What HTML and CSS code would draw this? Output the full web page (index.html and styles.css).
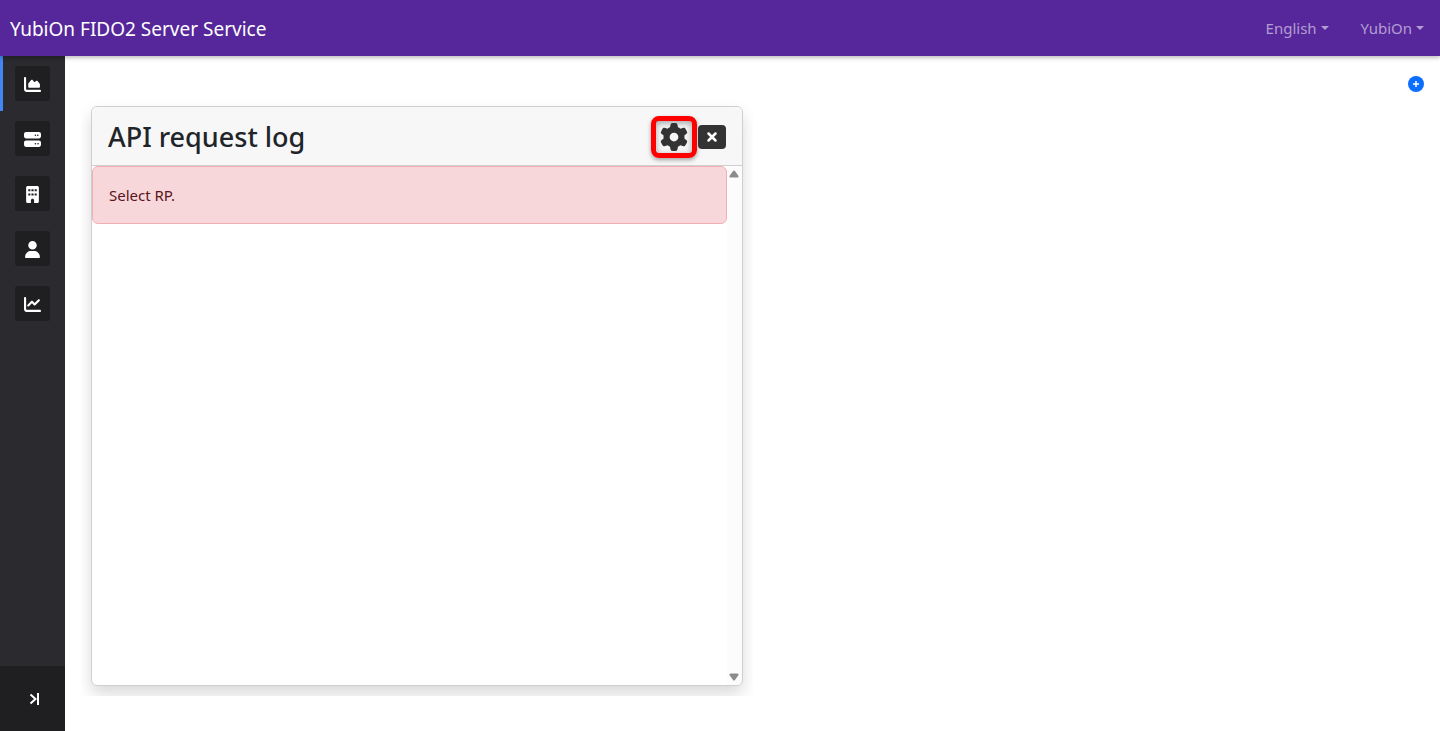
FILE: index.html
```html
<!DOCTYPE html>
<html lang="en">
<head>
    <meta charset="UTF-8">
    <meta name="viewport" content="width=device-width, initial-scale=1.0">
    <title>YubiOn FIDO2 Server Service</title>
    <link rel="stylesheet" href="styles.css">
</head>
<body>
    <header class="navbar">
        <a href="#" class="brand">YubiOn FIDO2 Server Service</a>
        <nav class="nav-menu">
            <button type="button" class="dropdown-toggle">English</button>
            <button type="button" class="dropdown-toggle">YubiOn</button>
        </nav>
    </header>

    <div class="layout">
        <aside class="sidebar">
            <nav class="side-menu">
                <a href="#" class="side-item active" aria-label="Dashboard">
                    <span class="side-icon">
                        <svg width="17" height="17" viewBox="0 0 512 512"><path d="M64 64c0-17.700-14.300-32-32-32S0 46.300 0 64V400c0 44.200 35.800 80 80 80H480c17.700 0 32-14.300 32-32s-14.300-32-32-32H80c-8.800 0-16-7.200-16-16V64zm96 288H448c17.700 0 32-14.300 32-32V251.800c0-7.600-2.700-15-7.700-20.800l-65.800-76.800c-12.100-14.200-33.700-15-46.900-1.800l-21 21c-10 10-26.400 9.200-35.400-1.600l-39.200-47c-12.600-15.100-35.700-15.400-48.700-.6L135.900 215c-5.100 5.800-7.900 13.300-7.900 21.100v84c0 17.700 14.300 32 32 32z"/></svg>
                    </span>
                </a>
                <a href="#" class="side-item" aria-label="Servers">
                    <span class="side-icon">
                        <svg width="17" height="17" viewBox="0 0 512 512"><path d="M64 32C28.700 32 0 60.700 0 96v64c0 35.300 28.700 64 64 64H448c35.300 0 64-28.700 64-64V96c0-35.300-28.700-64-64-64H64zm280 72a24 24 0 1 1 0 48 24 24 0 1 1 0-48zm48 24a24 24 0 1 1 48 0 24 24 0 1 1 -48 0zM64 288c-35.300 0-64 28.700-64 64v64c0 35.300 28.700 64 64 64H448c35.300 0 64-28.700 64-64V352c0-35.300-28.700-64-64-64H64zm280 72a24 24 0 1 1 0 48 24 24 0 1 1 0-48zm56 24a24 24 0 1 1 48 0 24 24 0 1 1 -48 0z"/></svg>
                    </span>
                </a>
                <a href="#" class="side-item" aria-label="Company">
                    <span class="side-icon">
                        <svg width="13" height="17" viewBox="0 0 384 512"><path fill-rule="evenodd" d="M48 0C21.500 0 0 21.500 0 48V464c0 26.500 21.500 48 48 48h96V432c0-26.500 21.500-48 48-48s48 21.500 48 48v80h96c26.500 0 48-21.500 48-48V48c0-26.500-21.500-48-48-48H48zM64 96h64v64H64zM160 96h64v64H160zM256 96h64v64H256zM64 224h64v64H64zM160 224h64v64H160zM256 224h64v64H256z"/></svg>
                    </span>
                </a>
                <a href="#" class="side-item" aria-label="Users">
                    <span class="side-icon">
                        <svg width="15" height="17" viewBox="0 0 448 512"><path d="M224 256A128 128 0 1 0 224 0a128 128 0 1 0 0 256zm-45.700 48C79.800 304 0 383.800 0 482.300C0 498.700 13.300 512 29.700 512H418.300c16.400 0 29.700-13.300 29.700-29.700C448 383.800 368.200 304 269.700 304H178.300z"/></svg>
                    </span>
                </a>
                <a href="#" class="side-item" aria-label="Statistics">
                    <span class="side-icon">
                        <svg width="17" height="17" viewBox="0 0 512 512"><path d="M64 64c0-17.700-14.300-32-32-32S0 46.300 0 64V400c0 44.200 35.800 80 80 80H480c17.700 0 32-14.300 32-32s-14.300-32-32-32H80c-8.800 0-16-7.200-16-16V64zm406.600 86.600c12.500-12.500 12.500-32.800 0-45.300s-32.800-12.500-45.300 0L320 210.700l-57.400-57.400c-12.500-12.500-32.800-12.500-45.300 0l-112 112c-12.500 12.500-12.500 32.800 0 45.300s32.800 12.500 45.300 0L240 221.300l57.400 57.400c12.500 12.500 32.800 12.500 45.300 0l128-128z"/></svg>
                    </span>
                </a>
            </nav>
            <button type="button" class="side-toggle" aria-label="Expand menu">
                <svg width="12" height="12" viewBox="0 0 12 12"><path d="M1.500 1.500L6.500 6l-5 4.500" fill="none" stroke="currentColor" stroke-width="2"/><path d="M8 0h2v12H8z"/></svg>
            </button>
        </aside>

        <main class="content">
            <div class="toolbar">
                <button type="button" class="add-button" aria-label="Add widget">
                    <svg width="16" height="16" viewBox="0 0 16 16"><circle cx="8" cy="8" r="8" fill="#0d6efd"/><path d="M8 5v6M5 8h6" stroke="#fff" stroke-width="1.500"/></svg>
                </button>
            </div>

            <div class="widget">
                <section class="card">
                    <div class="card-header">
                        <h1>API request log</h1>
                        <button type="button" class="setting-button" aria-label="Settings">
                            <svg width="28" height="28" viewBox="0 0 512 512"><path d="M495.900 166.600c3.200 8.700 .5 18.400-6.400 24.600l-43.300 39.400c1.100 8.300 1.700 16.800 1.700 25.400s-.6 17.100-1.700 25.400l43.300 39.400c6.900 6.200 9.600 15.900 6.400 24.600c-4.400 11.900-9.700 23.300-15.800 34.300l-4.700 8.100c-6.600 11-14 21.400-22.100 31.200c-5.900 7.200-15.700 9.600-24.500 6.800l-55.700-17.700c-13.400 10.300-28.200 18.900-44 25.400l-12.500 57.100c-2 9.100-9 16.300-18.200 17.800c-13.800 2.300-28 3.500-42.500 3.500s-28.700-1.200-42.500-3.500c-9.200-1.500-16.200-8.700-18.200-17.800l-12.500-57.100c-15.800-6.500-30.600-15.100-44-25.400L83.100 425.900c-8.800 2.800-18.600 .3-24.500-6.800c-8.100-9.800-15.500-20.200-22.100-31.200l-4.700-8.100c-6.100-11-11.400-22.400-15.800-34.300c-3.200-8.700-.5-18.400 6.400-24.600l43.300-39.400C64.600 273.100 64 264.600 64 256s.6-17.100 1.700-25.400L22.400 191.200c-6.900-6.200-9.600-15.900-6.400-24.600c4.400-11.900 9.700-23.300 15.800-34.300l4.700-8.100c6.600-11 14-21.400 22.100-31.200c5.900-7.200 15.700-9.600 24.500-6.800l55.700 17.700c13.400-10.300 28.200-18.900 44-25.400l12.500-57.100c2-9.100 9-16.300 18.200-17.800C227.300 1.200 241.500 0 256 0s28.700 1.200 42.500 3.500c9.200 1.500 16.200 8.700 18.200 17.800l12.500 57.100c15.800 6.500 30.600 15.100 44 25.400l55.700-17.700c8.800-2.800 18.600-.3 24.500 6.800c8.100 9.800 15.500 20.200 22.100 31.200l4.700 8.100c6.100 11 11.400 22.400 15.800 34.300zM256 336a80 80 0 1 0 0-160 80 80 0 1 0 0 160z"/></svg>
                        </button>
                        <button type="button" class="close-button" aria-label="Close">
                            <svg width="12" height="12" viewBox="0 0 12 12"><path d="M2.500 2.500l7 7M9.500 2.500l-7 7" fill="none" stroke="currentColor" stroke-width="2.500" stroke-linecap="round"/></svg>
                        </button>
                    </div>
                    <div class="card-body">
                        <div class="log-area">
                            <div class="alert" role="alert">Select RP.</div>
                        </div>
                        <div class="scrollbar">
                            <svg width="10" height="8" viewBox="0 0 10 8"><path d="M4 1Q5 0 6 1L9.500 6Q10 7.500 8.500 7.500H1.500Q0 7.500 .5 6z"/></svg>
                            <svg width="10" height="8" viewBox="0 0 10 8"><path d="M4 7Q5 8 6 7L9.500 2Q10 .5 8.500 .5H1.500Q0 .5 .5 2z"/></svg>
                        </div>
                    </div>
                </section>
            </div>
        </main>
    </div>
</body>
</html>
```

FILE: styles.css
```css
* {
    box-sizing: border-box;
}

body {
    margin: 0;
    min-height: 100vh;
    display: flex;
    flex-direction: column;
    font-family: "Segoe UI", "Noto Sans", "Open Sans", sans-serif;
    font-size: 15px;
    line-height: 24px;
    color: #212529;
    background-color: #fff;
}

button {
    padding: 0;
    border: none;
    background: none;
    font: inherit;
    cursor: pointer;
}

svg {
    display: block;
    fill: currentColor;
}

/* navbar */
.navbar {
    display: flex;
    justify-content: space-between;
    align-items: center;
    height: 56px;
    padding: 0 16px 0 10px;
    background-color: #56279a;
    box-shadow: 0 2px 4px rgba(0, 0, 0, 0.25);
    z-index: 1;
}

.brand {
    padding-top: 2px;
    color: #fff;
    font-size: 19px;
    text-decoration: none;
}

.nav-menu {
    display: flex;
    gap: 32px;
}

.dropdown-toggle {
    display: flex;
    align-items: center;
    gap: 4px;
    color: #b39dd3;
}

.dropdown-toggle::after {
    content: "";
    border-top: 4px solid;
    border-left: 4px solid transparent;
    border-right: 4px solid transparent;
}

.layout {
    display: flex;
    flex: 1;
}

/* sidebar */
.sidebar {
    display: flex;
    flex-direction: column;
    justify-content: space-between;
    width: 65px;
    background-color: #2b2a2f;
    color: #fff;
}

.side-item {
    display: flex;
    padding: 10px 12px;
    border-left: 3px solid transparent;
    color: #fff;
}

.side-item.active {
    border-left-color: #4285f4;
}

.side-icon {
    display: flex;
    justify-content: center;
    align-items: center;
    width: 35px;
    height: 35px;
    padding-top: 1px;
    border-radius: 3px;
    background-color: #1f1f21;
}

.side-toggle {
    display: flex;
    justify-content: center;
    align-items: center;
    height: 65px;
    padding-left: 4px;
    background-color: #1f1f21;
    color: #fff;
}

/* dashboard */
.content {
    flex: 1;
    padding: 20px 16px;
}

.toolbar {
    display: flex;
    justify-content: flex-end;
    margin-bottom: 4px;
}

.widget {
    width: 50%;
    height: 600px;
    padding: 10px;
    overflow: hidden;
}

.card {
    display: flex;
    flex-direction: column;
    height: 100%;
    border: 1px solid #cfcfcf;
    border-radius: 6px;
    background-color: #fff;
    box-shadow: 0 8px 16px rgba(0, 0, 0, 0.15);
}

.card-header {
    display: flex;
    align-items: center;
    gap: 1px;
    padding: 9px 16px 7px;
    border-bottom: 1px solid #cfcfcf;
    border-radius: 5px 5px 0 0;
    background-color: #f7f7f7;
}

h1 {
    flex: 1;
    margin: 0;
    font-size: 27px;
    font-weight: 500;
    line-height: 34px;
}

.setting-button {
    padding: 2px 4px;
    border: 5px solid #f00;
    border-radius: 8px;
    color: #333;
    box-shadow: 0 2px 4px rgba(0, 0, 0, 0.35), inset 0 2px 6px rgba(0, 0, 0, 0.35);
}

.close-button {
    padding: 6px 8px;
    border-radius: 4px;
    background-color: #333;
    color: #fff;
}

.card-body {
    display: flex;
    flex: 1;
}

.log-area {
    flex: 1;
}

.alert {
    padding: 16px;
    border: 1px solid #f1aeb5;
    border-radius: 6px;
    background-color: #f8d7da;
    color: #58151c;
}

.scrollbar {
    display: flex;
    flex-direction: column;
    justify-content: space-between;
    align-items: center;
    width: 15px;
    padding: 4px 0;
    border-radius: 0 0 6px 0;
    background-color: #fcfcfc;
    color: #8b8b8b;
}
```
